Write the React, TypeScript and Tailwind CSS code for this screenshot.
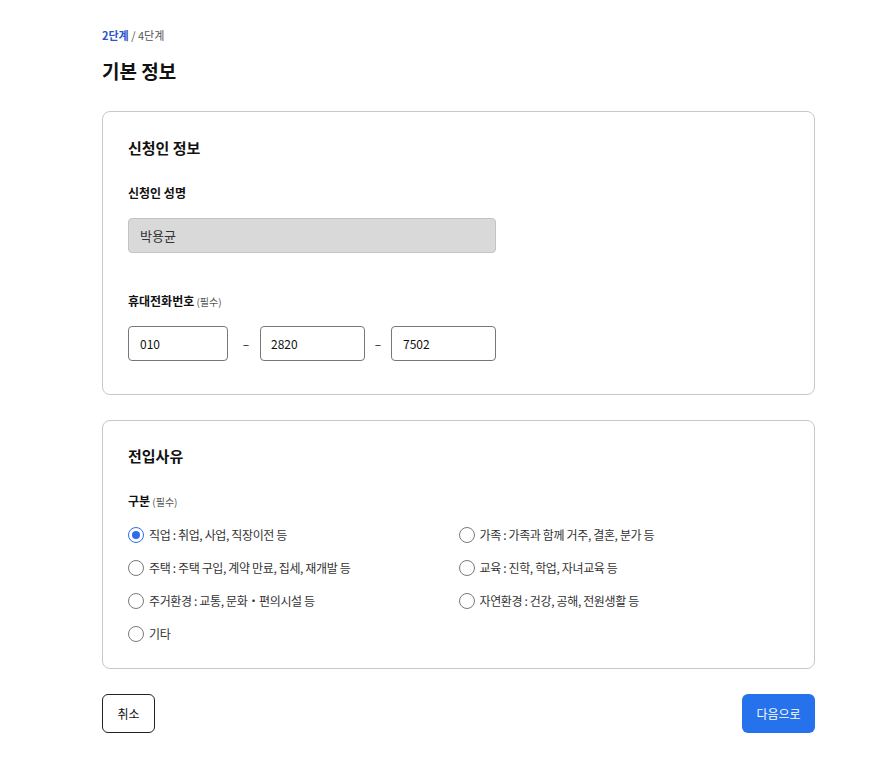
import React from "react";

const font = { fontFamily: '"Noto Sans CJK KR", "Noto Sans", sans-serif' };

function Radio({ label, checked }: { label: string; checked?: boolean }) {
  return (
    <label className="flex items-center gap-[5px] h-[20px]">
      {checked ? (
        <span className="w-[16px] h-[16px] rounded-full border-[1.5px] border-[#2b6fe8] flex items-center justify-center">
          <span className="w-[8px] h-[8px] rounded-full bg-[#2b6fe8]" />
        </span>
      ) : (
        <span className="w-[16px] h-[16px] rounded-full border-[1.5px] border-[#7a7a7a]" />
      )}
      <span className="text-[12px] tracking-[-0.03em] text-[#333]">{label}</span>
    </label>
  );
}

export default function App() {
  return (
    <div className="bg-white min-h-[771px] text-[#111]" style={font}>
      <div className="pl-[102px] w-[815px] pt-[26px]">
        <div className="text-[11px] leading-[18px]">
          <span className="font-bold text-[#2d56c8]">2단계</span>
          <span className="text-[#555]"> / 4단계</span>
        </div>
        <h1 className="text-[19px] font-bold leading-[30px] mt-[12px]">기본 정보</h1>

        <div className="mt-[25px] border border-[#c8c8c8] rounded-[8px] px-[25px] pt-[24px] pb-[33px]">
          <h2 className="text-[15px] font-bold leading-[24px]">신청인 정보</h2>
          <div className="text-[12px] font-bold leading-[18px] mt-[24px]">신청인 성명</div>
          <div className="mt-[16px] w-[368px] h-[35px] rounded-[4px] bg-[#d9d9d9] border border-[#c4c4c4] flex items-center px-[11px] text-[13px] text-[#333]">
            박용균
          </div>
          <div className="mt-[39px] text-[12px] leading-[18px]">
            <span className="font-bold">휴대전화번호</span>
            <span className="text-[10px] text-[#555]"> (필수)</span>
          </div>
          <div className="mt-[15px] flex items-center">
            <div className="w-[100px] h-[35px] rounded-[4px] border border-[#777] flex items-center px-[11px] text-[12px]">010</div>
            <span className="w-[32px] text-center text-[12px] pl-[4px]">–</span>
            <div className="w-[105px] h-[35px] rounded-[4px] border border-[#777] flex items-center px-[10px] text-[12px]">2820</div>
            <span className="w-[26px] text-center text-[12px]">–</span>
            <div className="w-[105px] h-[35px] rounded-[4px] border border-[#777] flex items-center px-[11px] text-[12px]">7502</div>
          </div>
        </div>

        <div className="mt-[25px] border border-[#c8c8c8] rounded-[8px] px-[25px] pt-[23px] pb-[24px]">
          <h2 className="text-[15px] font-bold leading-[24px]">전입사유</h2>
          <div className="mt-[24px] text-[12px] leading-[18px]">
            <span className="font-bold">구분</span>
            <span className="text-[10px] text-[#555]"> (필수)</span>
          </div>
          <div className="mt-[14px] grid grid-cols-2 gap-y-[13px]">
            <Radio label="직업 : 취업, 사업, 직장이전 등" checked />
            <Radio label="가족 : 가족과 함께 거주, 결혼, 분가 등" />
            <Radio label="주택 : 주택 구입, 계약 만료, 집세, 재개발 등" />
            <Radio label="교육 : 진학, 학업, 자녀교육 등" />
            <Radio label="주거환경 : 교통, 문화・편의시설 등" />
            <Radio label="자연환경 : 건강, 공해, 전원생활 등" />
            <Radio label="기타" />
          </div>
        </div>

        <div className="mt-[25px] flex justify-between">
          <button className="w-[53px] h-[39px] rounded-[6px] border border-[#222] text-[12px] bg-white">취소</button>
          <button className="w-[73px] h-[39px] rounded-[6px] bg-[#2671ec] text-white text-[12px]">다음으로</button>
        </div>
      </div>
    </div>
  );
}
